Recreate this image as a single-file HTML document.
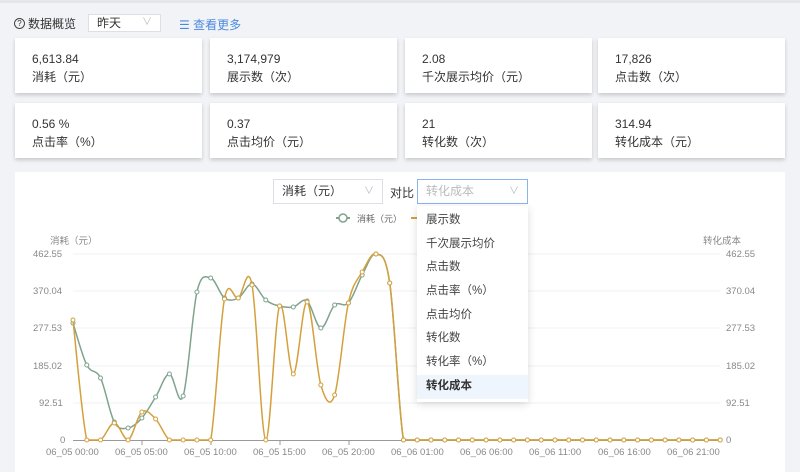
<!DOCTYPE html>
<html><head><meta charset="utf-8"><style>
*{margin:0;padding:0;box-sizing:border-box}
body{width:800px;height:467px;overflow:hidden;background:#f2f3f6;font-family:"Liberation Sans","Noto Sans CJK SC",sans-serif;color:#333;position:relative}
.topline{position:absolute;left:0;top:0;width:800px;height:3px;background:#e4e6ea}
.hdr{position:absolute;top:15px;left:14px;font-size:12px;display:flex;align-items:center}
.q{width:11px;height:11px;border:1px solid #444;border-radius:50%;font-size:8px;line-height:9px;text-align:center;margin-right:3px}
.sel{position:absolute;background:#fff;border:1px solid #dcdfe6;font-size:12px;padding-left:8px;line-height:20px}
.sel .ar{position:absolute;right:8px;top:0;color:#bbb;font-size:10px}
.card{position:absolute;width:187px;height:55px;background:#fff;box-shadow:0 2px 4px rgba(0,0,0,.18);font-size:12px;padding:12px 0 0 17px;line-height:18px}
.panel{position:absolute;left:15px;top:172px;width:770px;height:300px;background:#fff}
.dd{position:absolute;left:417px;top:206px;width:111px;height:196px;background:#fff;box-shadow:0 2px 8px rgba(0,0,0,.15);font-size:11.5px;padding-top:3px}
.dd div{height:23.7px;line-height:23.7px;padding-left:9px;color:#444}
.dd .on{background:#eef5fc;font-weight:bold;color:#333}
.ax{position:absolute;font-size:9.5px;color:#888}
</style></head><body>
<div class="topline"></div>
<div class="hdr"><span class="q">?</span>数据概览</div>
<div class="sel" style="left:88px;top:14px;width:73px;height:18px;line-height:16px">昨天<span class="ar">∨</span></div>
<div style="position:absolute;left:179px;top:16px;font-size:12px;color:#4a8be0">☰ 查看更多</div>
<div class="card" style="left:15px;top:38px">6,613.84<br>消耗（元）</div>
<div class="card" style="left:210px;top:38px">3,174,979<br>展示数（次）</div>
<div class="card" style="left:405px;top:38px">2.08<br>千次展示均价（元）</div>
<div class="card" style="left:598px;top:38px">17,826<br>点击数（次）</div>
<div class="card" style="left:15px;top:103px">0.56 %<br>点击率（%）</div>
<div class="card" style="left:210px;top:103px">0.37<br>点击均价（元）</div>
<div class="card" style="left:405px;top:103px">21<br>转化数（次）</div>
<div class="card" style="left:598px;top:103px">314.94<br>转化成本（元）</div>
<div class="panel"></div>
<div class="sel" style="left:273px;top:179px;width:110px;height:25px;line-height:23px">消耗（元）<span class="ar" style="line-height:23px">∨</span></div>
<div style="position:absolute;left:390px;top:184px;font-size:12px">对比</div>
<div class="sel" style="left:417px;top:179px;width:111px;height:25px;line-height:23px;border-color:#8ab4ec;color:#bbb">转化成本<span class="ar" style="line-height:23px">∨</span></div>
<svg style="position:absolute;left:0;top:0" width="800" height="467" id="s">
<g stroke="#eef0f3"><line x1="73" x2="720" y1="254" y2="254"/><line x1="73" x2="720" y1="291" y2="291"/><line x1="73" x2="720" y1="328" y2="328"/><line x1="73" x2="720" y1="366" y2="366"/><line x1="73" x2="720" y1="403" y2="403"/></g>
<line x1="73" x2="720" y1="440.5" y2="440.5" stroke="#999"/>
<g stroke="#999"><line x1="142" x2="142" y1="440" y2="445"/><line x1="211" x2="211" y1="440" y2="445"/><line x1="280" x2="280" y1="440" y2="445"/><line x1="349" x2="349" y1="440" y2="445"/></g>
<g fill="none" stroke-width="2"><path d="M336 218h14" stroke="#7fa38d"/><circle cx="343" cy="218" r="4" stroke="#7fa38d" fill="#fff" stroke-width="1.5"/><path d="M411 218h6" stroke="#d4a03c"/></g>
<text x="357" y="222" font-size="9" fill="#666">消耗（元）</text>
</svg>
<div class="ax" style="left:50px;top:233px">消耗（元）</div>
<div class="ax" style="left:703px;top:233px">转化成本</div>
<div class="ax" style="left:33px;top:249px">462.55</div>
<div class="ax" style="left:33px;top:286px">370.04</div>
<div class="ax" style="left:33px;top:323px">277.53</div>
<div class="ax" style="left:33px;top:361px">185.02</div>
<div class="ax" style="left:39px;top:398px">92.51</div>
<div class="ax" style="left:60px;top:435px">0</div>
<div class="ax" style="left:726px;top:249px">462.55</div>
<div class="ax" style="left:726px;top:286px">370.04</div>
<div class="ax" style="left:726px;top:323px">277.53</div>
<div class="ax" style="left:726px;top:361px">185.02</div>
<div class="ax" style="left:726px;top:398px">92.51</div>
<div class="ax" style="left:726px;top:435px">0</div>
<div class="ax" style="left:46px;top:447px">06_05 00:00</div>
<div class="ax" style="left:115px;top:447px">06_05 05:00</div>
<div class="ax" style="left:184px;top:447px">06_05 10:00</div>
<div class="ax" style="left:253px;top:447px">06_05 15:00</div>
<div class="ax" style="left:322px;top:447px">06_05 20:00</div>
<div class="ax" style="left:391px;top:447px">06_06 01:00</div>
<div class="ax" style="left:460px;top:447px">06_06 06:00</div>
<div class="ax" style="left:529px;top:447px">06_06 11:00</div>
<div class="ax" style="left:598px;top:447px">06_06 16:00</div>
<div class="ax" style="left:667px;top:447px">06_06 21:00</div>
<div class="dd"><div>展示数</div><div>千次展示均价</div><div>点击数</div><div>点击率（%）</div><div>点击均价</div><div>转化数</div><div>转化率（%）</div><div class="on">转化成本</div></div>
<script>
var g=[323,365,378,422,428,418,397,374,396,292,278,298,298,284,300,306,307,301,328,305,303,275,254,283];
var o=[320,440,440,423,440,412,419,440,440,440,440,299,298,285,440,306,374,302,385,395,303,272,254,283];
while(g.length<48){g.push(440);o.push(440);}
function pts(a){return a.map(function(y,i){return [73+i*13.77,y]});}
function cl(v){return Math.min(440,Math.max(250,v));}
function path(p){var d="M"+p[0][0]+" "+p[0][1];for(var i=0;i<p.length-1;i++){var p0=p[i-1]||p[i],p1=p[i],p2=p[i+1],p3=p[i+2]||p2;var t=0.17;d+=" C"+(p1[0]+(p2[0]-p0[0])*t)+" "+cl(p1[1]+(p2[1]-p0[1])*t)+" "+(p2[0]-(p3[0]-p1[0])*t)+" "+cl(p2[1]-(p3[1]-p1[1])*t)+" "+p2[0]+" "+p2[1];}return d;}
var s=document.getElementById('s'),h='';
[[g,'#7fa38d'],[o,'#d4a03c']].forEach(function(x){var p=pts(x[0]);h+='<path d="'+path(p)+'" fill="none" stroke="'+x[1]+'" stroke-width="1.5"/>';p.forEach(function(q){h+='<circle cx="'+q[0]+'" cy="'+q[1]+'" r="2" fill="#fff" stroke="'+x[1]+'"/>';});});
s.insertAdjacentHTML('beforeend',h);
</script>
</body></html>
